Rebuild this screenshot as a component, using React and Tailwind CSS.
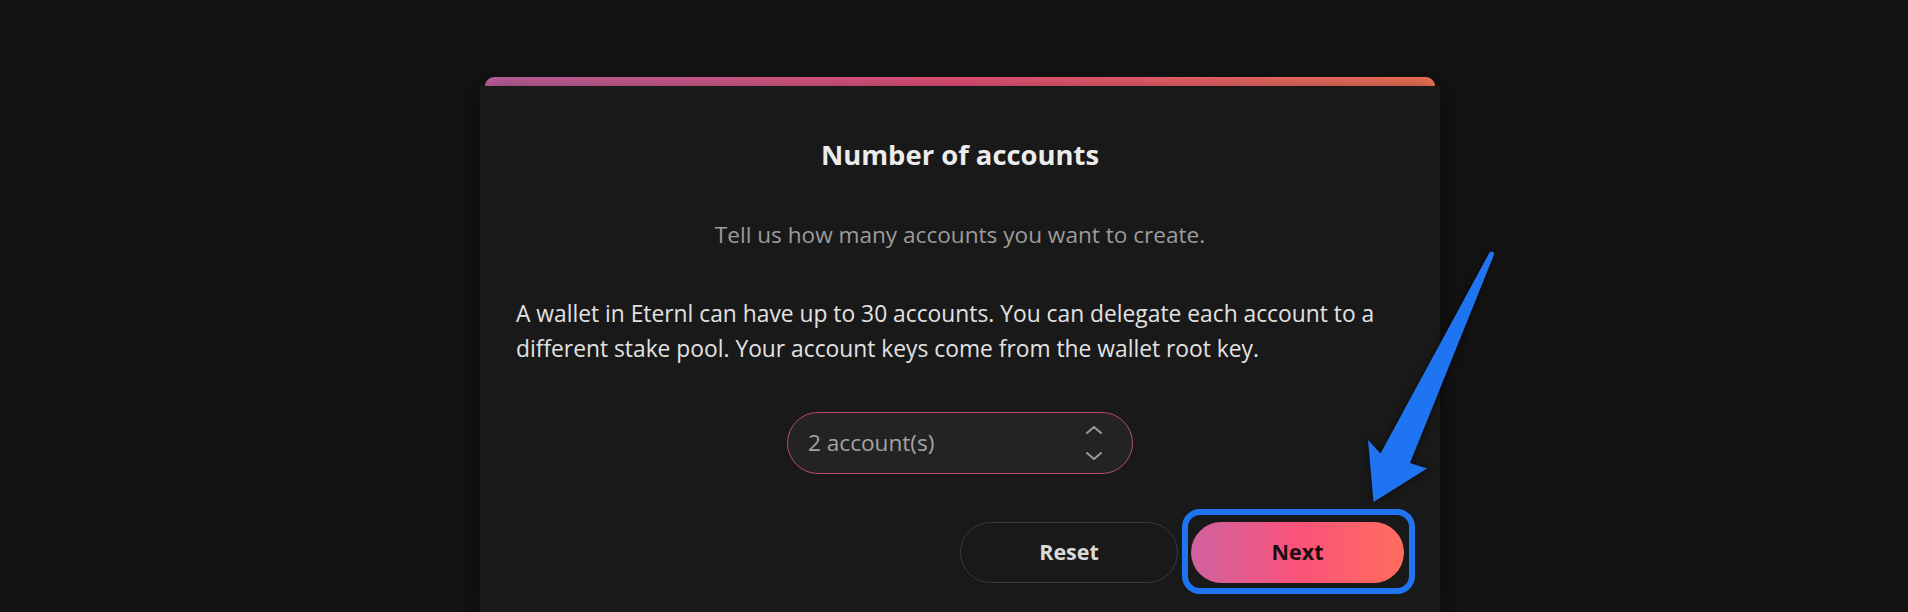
import React from "react";

function Chevrons() {
  return (
    <div className="flex flex-col items-center gap-[18px]">
      <svg width="16" height="8" viewBox="0 0 16 8" fill="none">
        <path d="M1 7L8 1L15 7" stroke="#9a9a9a" strokeWidth="2" strokeLinecap="round" strokeLinejoin="round" />
      </svg>
      <svg width="16" height="8" viewBox="0 0 16 8" fill="none">
        <path d="M1 1L8 7L15 1" stroke="#9a9a9a" strokeWidth="2" strokeLinecap="round" strokeLinejoin="round" />
      </svg>
    </div>
  );
}

function Arrow() {
  // annotation arrow pointing at the Next button
  return (
    <svg
      className="absolute left-0 top-0 pointer-events-none"
      width="1908"
      height="612"
      viewBox="0 0 1908 612"
      style={{ filter: "drop-shadow(0 0 3px rgba(0,0,0,0.6))" }}
    >
      <path
        d="M1489.5 252.5 Q1492 250 1494.5 253.5 L1410 463 L1427 468.5 L1373.5 502 L1368 440 L1380.5 453.5 Z"
        fill="#1f74f2"
        strokeLinejoin="round"
      />
    </svg>
  );
}

export default function App() {
  return (
    <div
      className="fixed inset-0 overflow-hidden bg-[#131313] flex justify-center pt-[77px] pl-[12px]"
      style={{ fontFamily: '"Open Sans", "Noto Sans", sans-serif' }}
    >
      <div className="w-[960px] shrink-0 flex flex-col">
        {/* gradient top edge */}
        <div className="mx-[5px] h-[9px] rounded-t-[22px] bg-gradient-to-r from-[#c966a6] via-[#f55680] to-[#ff7a5a]" />

        <div className="flex-1 bg-[#191919] shadow-[0_0_24px_rgba(0,0,0,0.45)] px-[36px] pt-[51px] text-center">
          <h1 className="text-[27.4px] leading-[36px] font-bold text-[#ececec]">Number of accounts</h1>

          <p className="mt-[46px] text-[22.6px] leading-[32px] text-[#9c9c9c]">
            Tell us how many accounts you want to create.
          </p>

          <p className="mt-[45px] text-left text-[22.8px] leading-[35px] whitespace-nowrap text-[#e2e2e2]">
            A wallet in Eternl can have up to 30 accounts. You can delegate each account to a
            <br />
            different stake pool. Your account keys come from the wallet root key.
          </p>

          <div className="mt-[46px] flex justify-center">
            <div className="w-[346px] h-[62px] rounded-full border border-[#b94c66] bg-[#232323] flex items-center justify-between pl-[20px] pr-[30px]">
              <span className="text-[22.6px] text-[#a3a3a3]">2 account(s)</span>
              <Chevrons />
            </div>
          </div>

          <div className="mt-[48px] flex justify-end gap-[13px]">
            <button className="w-[218px] h-[61px] rounded-full border border-[#3a3a3a] text-[21.5px] font-bold text-[#dadada]">
              Reset
            </button>
            <div className="relative">
              <button className="w-[213px] h-[61px] rounded-full bg-gradient-to-r from-[#cf619f] via-[#fa5279] to-[#ff6d5c] text-[21.5px] font-bold text-[#1d0d12]">
                Next
              </button>
              <div className="absolute -left-[9px] -right-[11px] -top-[13px] -bottom-[11px] rounded-[18px] border-[6px] border-[#1f74f2] pointer-events-none" />
            </div>
          </div>
        </div>
      </div>
      <Arrow />
    </div>
  );
}
